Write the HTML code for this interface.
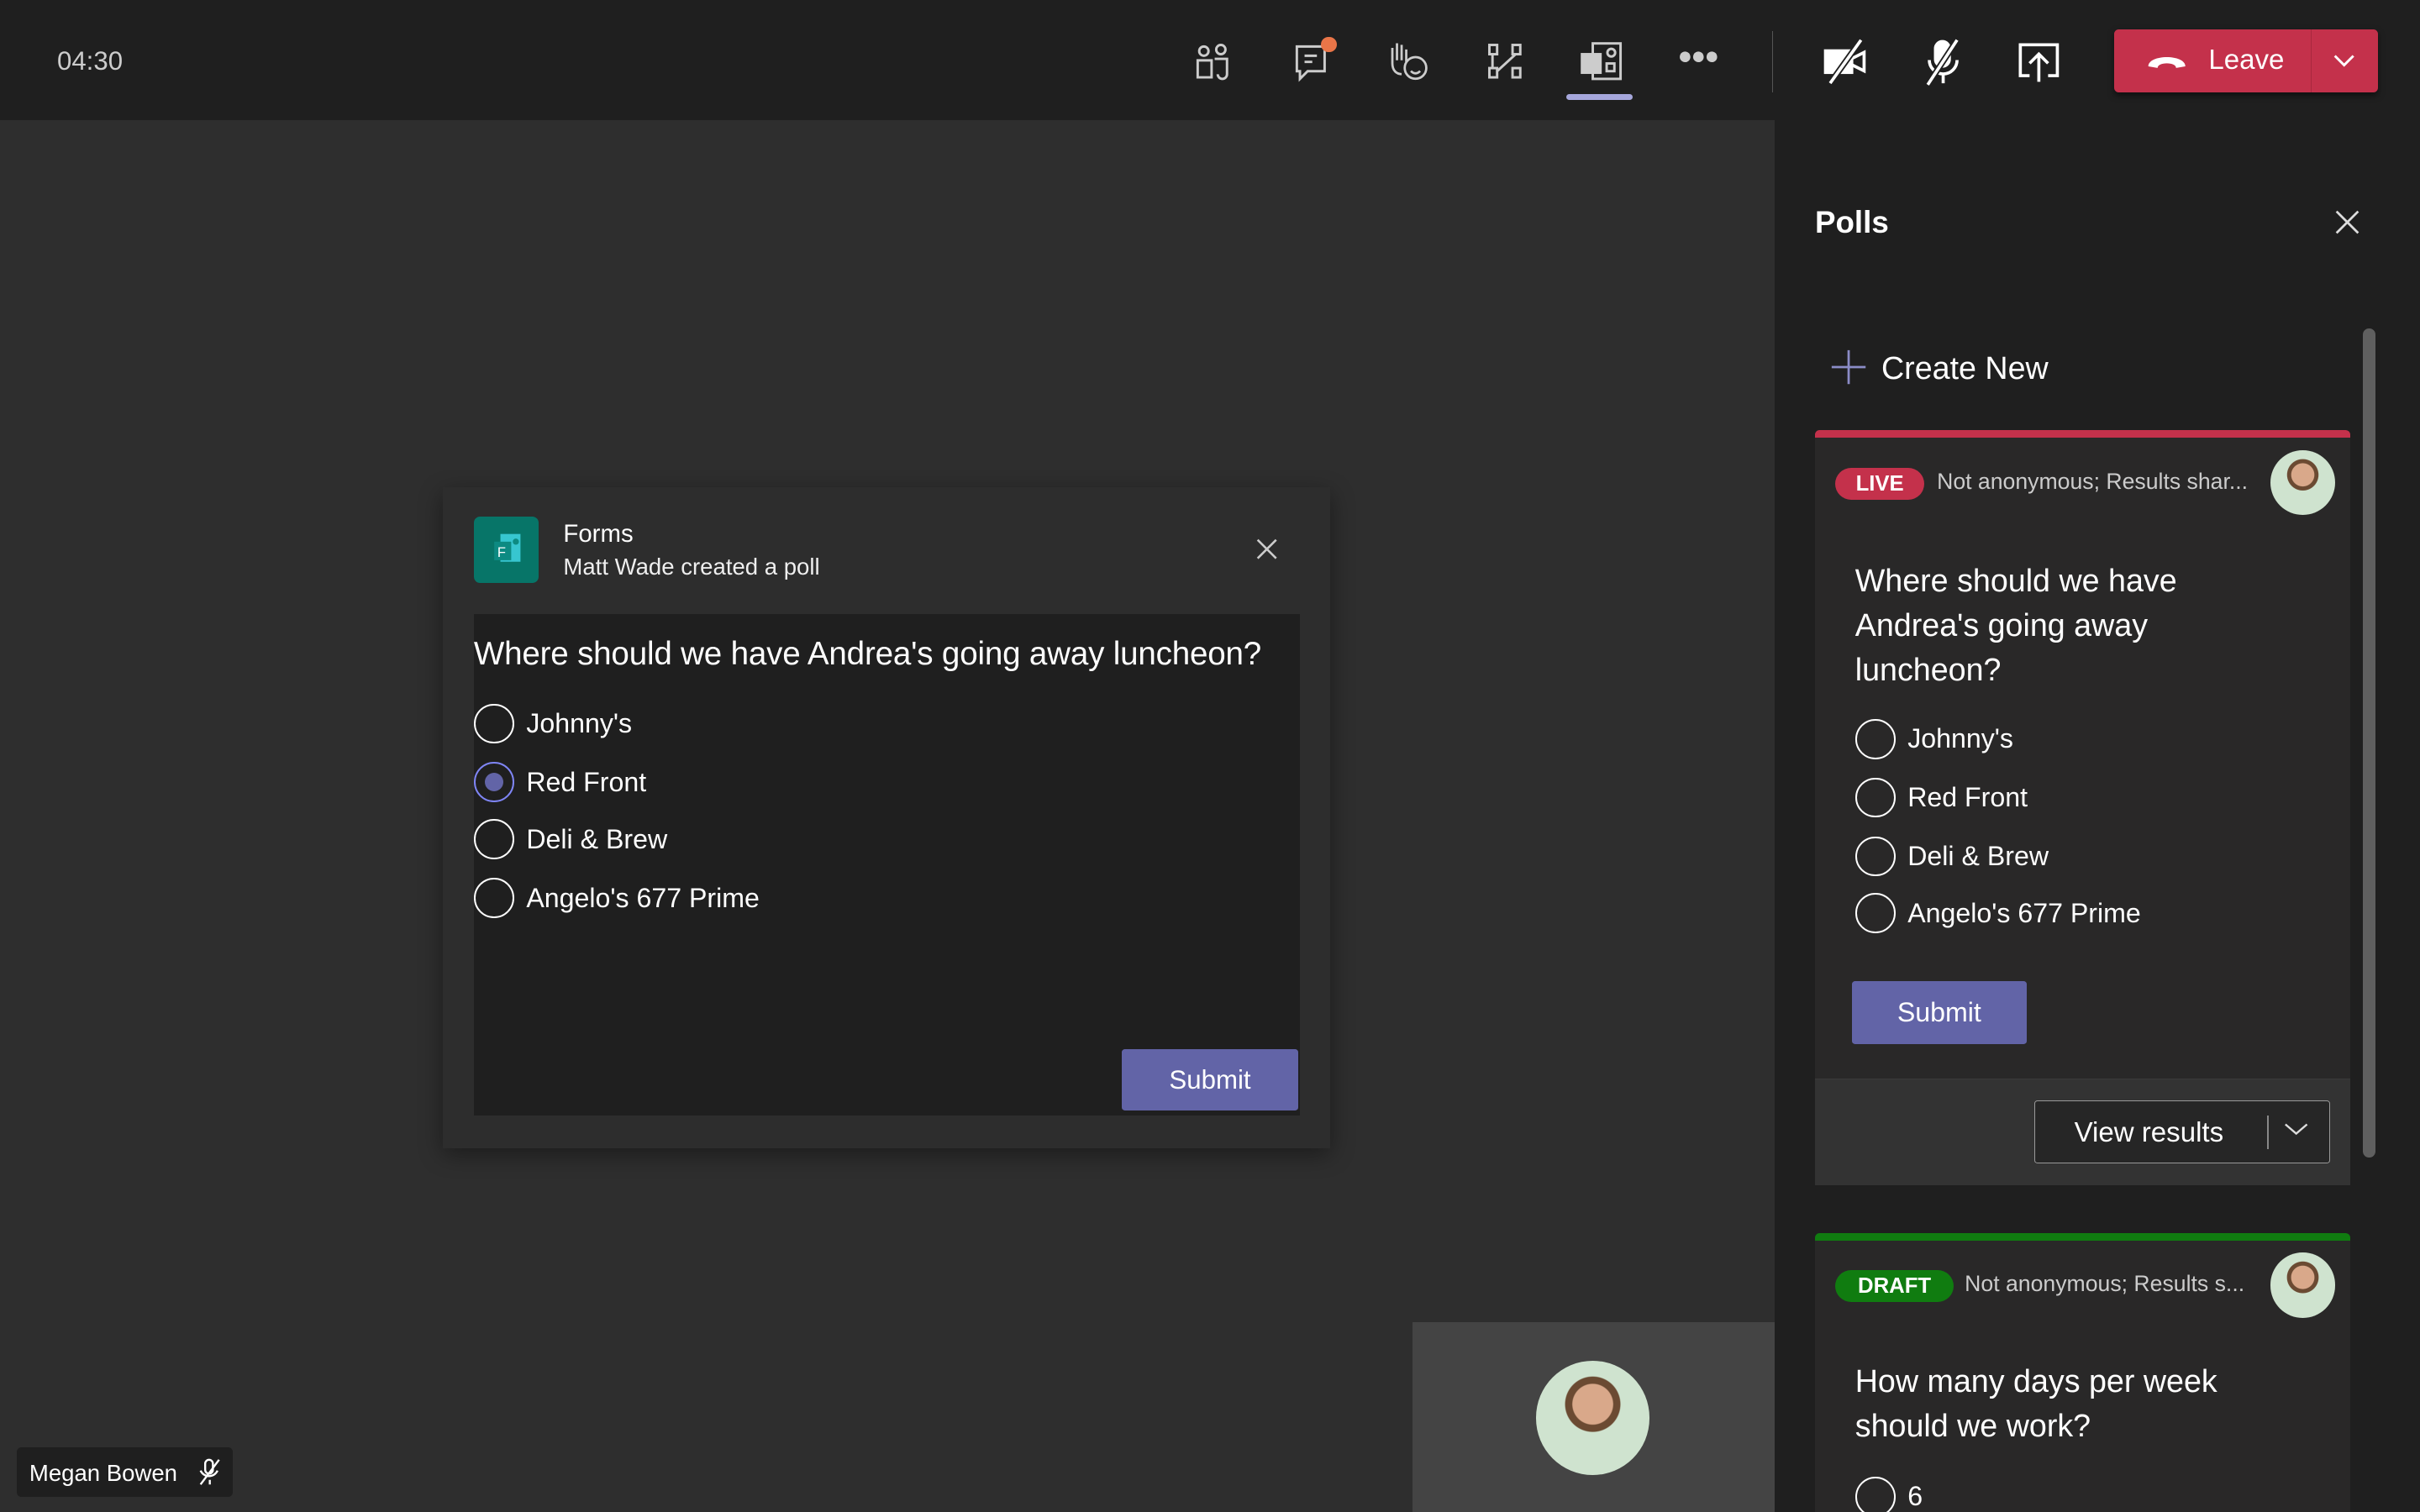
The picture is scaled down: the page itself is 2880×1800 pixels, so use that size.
<!DOCTYPE html>
<html><head><meta charset="utf-8"><style>
*{margin:0;padding:0;box-sizing:border-box}
html,body{width:2880px;height:1800px;overflow:hidden;background:#2e2e2e}
#r{zoom:1.83674;position:relative;width:1568px;height:980px;font-family:"Liberation Sans",sans-serif;color:#fff;overflow:hidden}
.a{position:absolute}
.top{left:0;top:0;width:1568px;height:78px;background:#1f1f1f}
.side{left:1150px;top:78px;width:418px;height:902px;background:#1f1f1f}
.rad{position:absolute;width:26px;height:26px;border:1.5px solid #fff;border-radius:50%}
.opt{position:absolute;font-size:17.5px;color:#fff}
svg{position:absolute}
</style></head><body><div id="r">
<div class="a top"></div>
<div class="a" style="left:37px;top:30px;font-size:17px;color:#ccc">04:30</div>
<svg style="left:772px;top:26px" width="28" height="28" viewBox="0 0 28 28" fill="none" stroke="#ccc" stroke-width="1.6"><circle cx="8" cy="7" r="3"/><circle cx="19" cy="6" r="3"/><path d="M4 13h9v11H4zM15 12h8v10a3 3 0 0 1-6 0"/></svg>
<svg style="left:836px;top:26px" width="32" height="30" viewBox="0 0 32 30" fill="none" stroke="#ccc" stroke-width="1.6"><path d="M4 4h18v16H11l-5 5v-5H4z"/><path d="M9 10h8M9 14h5"/></svg>
<div class="a" style="left:856px;top:24px;width:10px;height:10px;border-radius:50%;background:#e97548"></div>
<svg style="left:896px;top:25px" width="32" height="30" viewBox="0 0 32 30" fill="none" stroke="#ccc" stroke-width="1.5"><path d="M6 16V6M9 14V3M12 14V4M15 15V7M6 16c0 5 3 7 6 7"/><circle cx="21" cy="19" r="7"/><path d="M18 21c2 2 4 2 6 0"/></svg>
<svg style="left:962px;top:26px" width="26" height="28" viewBox="0 0 26 28" fill="none" stroke="#ccc" stroke-width="1.6"><rect x="3" y="3" width="5" height="6"/><rect x="18" y="3" width="5" height="6"/><rect x="3" y="18" width="5" height="6"/><rect x="18" y="18" width="5" height="6"/><path d="M5 9v9M20 9l-12 11"/></svg>
<svg style="left:1023px;top:26px" width="30" height="28" viewBox="0 0 30 28" fill="none" stroke="#ccc" stroke-width="1.6"><rect x="9" y="2" width="18" height="23"/><rect x="2" y="9" width="12" height="12" fill="#ccc"/><circle cx="21" cy="8" r="2.5"/><rect x="18" y="15" width="5" height="5"/></svg>
<div class="a" style="left:1015px;top:61px;width:43px;height:4px;border-radius:2px;background:#a6a7dc"></div>
<div class="a" style="left:1087px;top:27px;font-size:16px;color:#ccc;letter-spacing:-1px">●●●</div>
<div class="a" style="left:1148px;top:20px;width:1px;height:40px;background:#555"></div>
<svg style="left:1180px;top:24px" width="32" height="32" viewBox="0 0 32 32" fill="none" stroke="#fff" stroke-width="2"><rect x="3" y="9" width="17" height="14" fill="#fff"/><path d="M20 14l8-4v12l-8-4"/><path d="M6 30L26 2" stroke="#1f1f1f" stroke-width="4"/><path d="M6 30L26 2"/></svg>
<svg style="left:1244px;top:24px" width="30" height="32" viewBox="0 0 30 32" fill="none" stroke="#fff" stroke-width="2"><rect x="10" y="3" width="9" height="16" rx="4.5" fill="#fff"/><path d="M6 15a9 9 0 0 0 18 0M15 24v6"/><path d="M5 31L24 2" stroke="#1f1f1f" stroke-width="4"/><path d="M5 31L24 2"/></svg>
<svg style="left:1305px;top:25px" width="32" height="30" viewBox="0 0 32 30" fill="none" stroke="#fff" stroke-width="2"><path d="M10 24H4V4h24v20h-6"/><path d="M16 28V11M10 16l6-6 6 6"/></svg>
<div class="a" style="left:1370px;top:19px;width:171px;height:41px;background:#c4314b;border-radius:3px;box-shadow:0 2px 4px rgba(0,0,0,.5)"></div>
<div class="a" style="left:1497px;top:19px;width:1px;height:41px;background:#a8283e"></div>
<svg style="left:1390px;top:31px" width="28" height="16" viewBox="0 0 28 16"><path d="M2 12c0-8 24-8 24 0l-6 1c0-4-12-4-12 0z" fill="#fff"/></svg>
<div class="a" style="left:1431px;top:29px;font-size:18px">Leave</div>
<svg style="left:1511px;top:33px" width="16" height="12" viewBox="0 0 16 12" fill="none" stroke="#fff" stroke-width="1.6"><path d="M2 3l6 6 6-6"/></svg>

<div class="a" style="left:287px;top:316px;width:575px;height:428px;background:#2d2d2d;box-shadow:0 4px 14px rgba(0,0,0,.4)"></div>
<div class="a" style="left:307px;top:335px;width:42px;height:43px;border-radius:4px;background:#077568"></div>
<svg style="left:315px;top:344px" width="26" height="26" viewBox="0 0 26 26"><rect x="9" y="2" width="13" height="18" fill="#37c6d0"/><rect x="5" y="7" width="11" height="12" fill="#0d8a82"/><text x="7" y="17" font-size="9" fill="#fff" font-family="Liberation Sans">F</text><circle cx="19" cy="7" r="2" fill="#0d8a82"/></svg>
<div class="a" style="left:365px;top:337px;font-size:16px">Forms</div>
<div class="a" style="left:365px;top:359px;font-size:15px;color:#eee">Matt Wade created a poll</div>
<svg style="left:813px;top:348px" width="16" height="16" viewBox="0 0 16 16" stroke="#ccc" stroke-width="1.4"><path d="M2 2l12 12M14 2L2 14"/></svg>
<div class="a" style="left:307px;top:398px;width:535px;height:325px;background:#1f1f1f"></div>
<div class="a" style="left:307px;top:412px;font-size:21px;letter-spacing:-.1px">Where should we have Andrea's going away luncheon?</div>
<div class="rad" style="left:307px;top:456px"></div><div class="opt" style="left:341px;top:459px">Johnny's</div>
<div class="rad" style="left:307px;top:494px;border-color:#7f85f5"></div><div class="a" style="left:314px;top:501px;width:12px;height:12px;border-radius:50%;background:#6264a7"></div><div class="opt" style="left:341px;top:497px">Red Front</div>
<div class="rad" style="left:307px;top:531px"></div><div class="opt" style="left:341px;top:534px">Deli &amp; Brew</div>
<div class="rad" style="left:307px;top:569px"></div><div class="opt" style="left:341px;top:572px">Angelo's 677 Prime</div>
<div class="a" style="left:727px;top:680px;width:114px;height:40px;background:#6264a7;border-radius:2px;font-size:17px;text-align:center;line-height:40px">Submit</div>

<div class="a" style="left:915px;top:857px;width:235px;height:123px;background:#444"></div>
<div class="a" style="left:995px;top:882px;width:74px;height:74px;border-radius:50%;background:radial-gradient(circle at 50% 38%,#d9a88a 0 22%,#6b4a32 23% 30%,#cfe3cf 31% 100%)"></div>
<div class="a" style="left:11px;top:938px;width:140px;height:32px;background:#1f1f1f;border-radius:3px"></div>
<div class="a" style="left:19px;top:946px;font-size:15px">Megan Bowen</div>
<svg style="left:128px;top:945px" width="16" height="18" viewBox="0 0 16 18" fill="none" stroke="#fff" stroke-width="1.3"><rect x="5" y="1" width="5" height="9" rx="2.5"/><path d="M2 8a6 6 0 0 0 11 0M8 14v3M2 17L14 1"/></svg>

<div class="a side"></div>
<div class="a" style="left:1176px;top:133px;font-size:20px;font-weight:bold">Polls</div>
<svg style="left:1512px;top:135px" width="18" height="18" viewBox="0 0 18 18" stroke="#ddd" stroke-width="1.5"><path d="M2 2l14 14M16 2L2 16"/></svg>
<div class="a" style="left:1531px;top:213px;width:8px;height:537px;border-radius:4px;background:#5f5f5f"></div>
<svg style="left:1186px;top:226px" width="24" height="24" viewBox="0 0 24 24" stroke="#8b8cc7" stroke-width="1.5"><path d="M12 1v22M1 12h22"/></svg>
<div class="a" style="left:1219px;top:227px;font-size:20.5px">Create New</div>

<div class="a" style="left:1176px;top:279px;width:347px;height:489px;background:#292828;border-radius:3px;border-top:5px solid #c4314b"></div>
<div class="a" style="left:1176px;top:699px;width:347px;height:69px;background:#333;border-top:1px solid #3a3a3a"></div>
<div class="a" style="left:1189px;top:303px;width:58px;height:21px;border-radius:11px;background:#c4314b;font-size:14px;font-weight:bold;text-align:center;line-height:21px">LIVE</div>
<div class="a" style="left:1255px;top:304px;font-size:14.5px;color:#ccc">Not anonymous; Results shar...</div>
<div class="a" style="left:1471px;top:292px;width:42px;height:42px;border-radius:50%;background:radial-gradient(circle at 50% 38%,#d9a88a 0 22%,#6b4a32 23% 30%,#cfe3cf 31% 100%)"></div>
<div class="a" style="left:1202px;top:362px;font-size:20.5px;line-height:29px;width:240px">Where should we have Andrea's going away luncheon?</div>
<div class="rad" style="left:1202px;top:466px"></div><div class="opt" style="left:1236px;top:469px">Johnny's</div>
<div class="rad" style="left:1202px;top:504px"></div><div class="opt" style="left:1236px;top:507px">Red Front</div>
<div class="rad" style="left:1202px;top:542px"></div><div class="opt" style="left:1236px;top:545px">Deli &amp; Brew</div>
<div class="rad" style="left:1202px;top:579px"></div><div class="opt" style="left:1236px;top:582px">Angelo's 677 Prime</div>
<div class="a" style="left:1200px;top:636px;width:113px;height:41px;background:#6264a7;border-radius:2px;font-size:17.5px;text-align:center;line-height:41px">Submit</div>
<div class="a" style="left:1318px;top:713px;width:192px;height:41px;border:1px solid #999;border-radius:2px;background:#262626"></div>
<div class="a" style="left:1344px;top:724px;font-size:18px">View results</div>
<div class="a" style="left:1469px;top:723px;width:1px;height:22px;background:#888"></div>
<svg style="left:1480px;top:726px" width="16" height="12" viewBox="0 0 16 12" fill="none" stroke="#ddd" stroke-width="1.3"><path d="M1 3l7 6 7-6"/></svg>

<div class="a" style="left:1176px;top:799px;width:347px;height:200px;background:#292828;border-radius:3px;border-top:5px solid #107c10"></div>
<div class="a" style="left:1189px;top:823px;width:77px;height:21px;border-radius:11px;background:#107c10;font-size:14px;font-weight:bold;text-align:center;line-height:21px">DRAFT</div>
<div class="a" style="left:1273px;top:824px;font-size:14.5px;color:#ccc">Not anonymous; Results s...</div>
<div class="a" style="left:1471px;top:812px;width:42px;height:42px;border-radius:50%;background:radial-gradient(circle at 50% 38%,#d9a88a 0 22%,#6b4a32 23% 30%,#cfe3cf 31% 100%)"></div>
<div class="a" style="left:1202px;top:881px;font-size:20.5px;line-height:29px;width:255px">How many days per week should we work?</div>
<div class="rad" style="left:1202px;top:957px"></div><div class="opt" style="left:1236px;top:960px">6</div>
</div></body></html>
